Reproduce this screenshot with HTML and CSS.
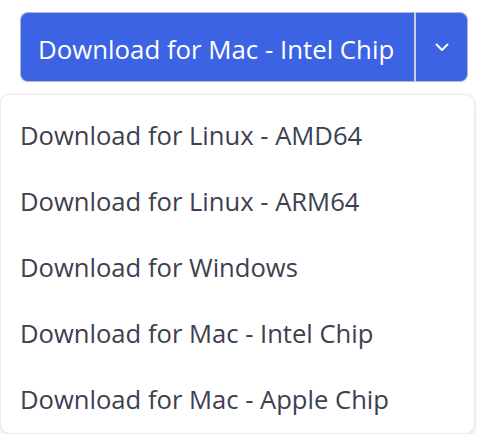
FILE: index.html
```html
<!DOCTYPE html>
<html>
<head>
<meta charset="utf-8">
<link rel="stylesheet" href="styles.css">
</head>
<body>
<div class="page">
  <div class="btn-group">
    <button class="btn btn-main">Download for Mac - Intel Chip</button>
    <button class="btn btn-toggle" aria-label="More options">
      <svg width="14" height="9" viewBox="0 0 14 9"><path d="M1.5 1.5 L7 7 L12.5 1.5" fill="none" stroke="#fff" stroke-width="2" stroke-linecap="round" stroke-linejoin="round"/></svg>
    </button>
  </div>
  <ul class="menu">
    <li class="menu-item">Download for Linux - AMD64</li>
    <li class="menu-item">Download for Linux - ARM64</li>
    <li class="menu-item">Download for Windows</li>
    <li class="menu-item">Download for Mac - Intel Chip</li>
    <li class="menu-item">Download for Mac - Apple Chip</li>
  </ul>
</div>
</body>
</html>
```

FILE: styles.css
```css
* { box-sizing: border-box; }
html, body { margin: 0; padding: 0; background: #fff; }
body { font-family: "Open Sans", "Noto Sans", sans-serif; }
.page { display: flex; flex-direction: column; align-items: flex-end; padding: 12px 2px 0 0; }
.btn-group { display: flex; height: 70px; margin-right: 7px; }
.btn {
  font: inherit;
  font-size: 25.8px;
  color: #fff;
  background: #3b63e4;
  border: 1px solid #aab6dc;
  margin: 0;
  cursor: pointer;
}
.btn-main {
  padding: 3px 0 0 17px;
  width: 395px;
  border-radius: 8px 0 0 8px;
  border-right: 1px solid #c9d0e6;
  text-align: left;
  white-space: nowrap;
}
.btn-toggle {
  width: 53px;
  border-left: 1px solid #c9d0e6;
  border-radius: 0 8px 8px 0;
  display: flex;
  align-items: center;
  justify-content: center;
  padding: 0;
}
.menu {
  list-style: none;
  margin: 12px 0 0 0;
  padding: 4px 0;
  width: 475px;
  align-self: flex-start;
  background: #fff;
  border: 1px solid #ececec;
  border-radius: 10px;
  box-shadow: 0 2px 5px rgba(0,0,0,0.12);
}
.menu-item {
  height: 66px;
  display: flex;
  align-items: center;
  padding: 6px 0 0 19px;
  font-size: 25.6px;
  color: #3c4150;
  white-space: nowrap;
}
```
